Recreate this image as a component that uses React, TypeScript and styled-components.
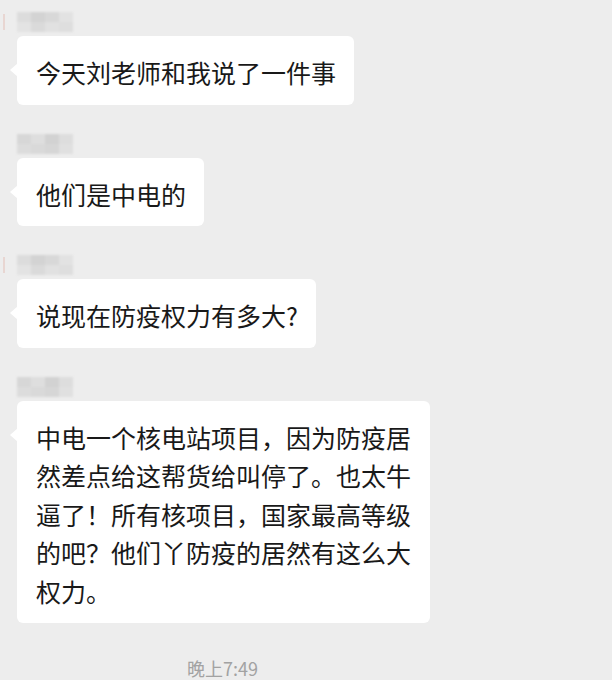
import React from 'react';
import styled, { createGlobalStyle } from 'styled-components';

const Global = createGlobalStyle`
	html, body {
		margin: 0;
		padding: 0;
		background: #ededed;
	}
	body {
		font-family: "Noto Sans CJK SC", "Noto Sans", sans-serif;
	}
`;

const Screen = styled.div`
	width: 612px;
	height: 680px;
	overflow: hidden;
	background: #ededed;
	padding: 12px 0 0 0;
	box-sizing: border-box;
	display: flex;
	flex-direction: column;
`;

const Message = styled.div`
	display: grid;
	grid-template-columns: 17px auto;
	margin-bottom: 29px;
`;

const AvatarEdge = styled.div<{ visible?: boolean }>`
	width: 2px;
	height: 16px;
	margin: 2px 0 0 3px;
	background: ${(p) => (p.visible ? '#e8d6d2' : 'transparent')};
	filter: blur(0.6px);
`;

const Content = styled.div`
	display: flex;
	flex-direction: column;
	align-items: flex-start;
`;

const Name = styled.div`
	display: grid;
	grid-template-columns: repeat(4, 14px);
	grid-template-rows: repeat(2, 10px);
	margin-bottom: 4px;
	filter: blur(1.2px);
`;

const Cell = styled.span<{ shade: string }>`
	background: ${(p) => p.shade};
`;

const Bubble = styled.div`
	position: relative;
	max-width: 376px;
	padding: 17px 18px 13px 19px;
	background: #ffffff;
	border-radius: 6px;
	font-size: 25px;
	line-height: 38.5px;
	color: #191919;

	&::before {
		content: '';
		position: absolute;
		left: -7px;
		top: 27px;
		border-top: 7px solid transparent;
		border-bottom: 7px solid transparent;
		border-right: 8px solid #ffffff;
	}
`;

const Time = styled.div`
	margin-top: 6px;
	padding-left: 187px;
	font-size: 18px;
	line-height: 20px;
	color: #a2a2a2;
`;

const shadesA = ['#dcdcdc', '#d3d3d3', '#d8d8d8', '#e2e2e2', '#e3e3e3', '#dadada', '#e1e1e1', '#dedede'];
const shadesB = ['#d7d7d7', '#dedede', '#d2d2d2', '#dddddd', '#dcdcdc', '#d9d9d9', '#d6d6d6', '#e0e0e0'];

const messages = [
	{ text: '今天刘老师和我说了一件事', edge: true, shades: shadesA },
	{ text: '他们是中电的', edge: false, shades: shadesB },
	{ text: '说现在防疫权力有多大?', edge: true, shades: shadesA },
	{
		text: '中电一个核电站项目，因为防疫居然差点给这帮货给叫停了。也太牛逼了！所有核项目，国家最高等级的吧？他们丫防疫的居然有这么大权力。',
		edge: false,
		shades: shadesB,
	},
];

const App: React.FC = () => {
	return (
		<>
			<Global />
			<Screen>
				{messages.map((m, i) => (
					<Message key={i}>
						<AvatarEdge visible={m.edge} />
						<Content>
							<Name>
								{m.shades.map((s, j) => (
									<Cell key={j} shade={s} />
								))}
							</Name>
							<Bubble>{m.text}</Bubble>
						</Content>
					</Message>
				))}
				<Time>晚上7:49</Time>
			</Screen>
		</>
	);
};

export default App;
